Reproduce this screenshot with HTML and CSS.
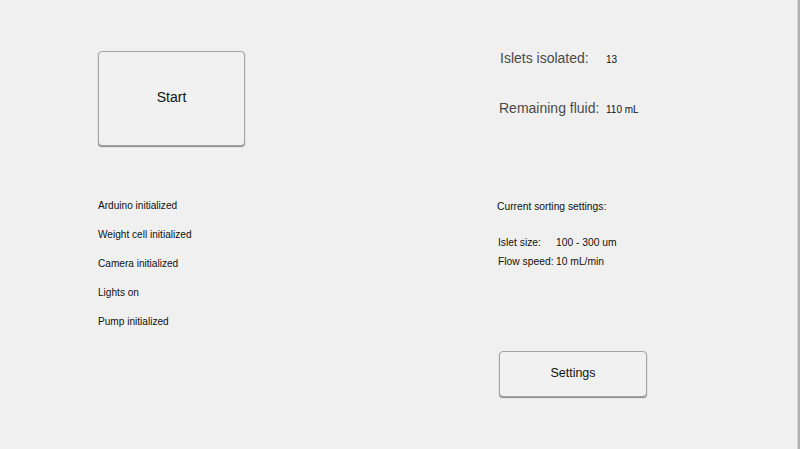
FILE: index.html
```html
<!DOCTYPE html>
<html>
<head>
<meta charset="utf-8">
<link rel="stylesheet" href="styles.css">
</head>
<body>
<div class="app">
  <div class="col left">
    <button class="btn btn-start">Start</button>
    <ul class="status">
      <li>Arduino initialized</li>
      <li>Weight cell initialized</li>
      <li>Camera initialized</li>
      <li>Lights on</li>
      <li>Pump initialized</li>
    </ul>
  </div>
  <div class="col right">
    <div class="stat stat-islets"><span class="stat-label">Islets isolated:</span><span class="stat-value">13</span></div>
    <div class="stat stat-fluid"><span class="stat-label">Remaining fluid:</span><span class="stat-value">110 mL</span></div>
    <div class="settings-title">Current sorting settings:</div>
    <div class="setting setting-first"><span class="setting-label">Islet size:</span><span class="setting-value">100 - 300 um</span></div>
    <div class="setting"><span class="setting-label">Flow speed:</span><span class="setting-value">10 mL/min</span></div>
    <button class="btn btn-settings">Settings</button>
  </div>
</div>
</body>
</html>
```
FILE: styles.css
```css
html, body {
  margin: 0;
  padding: 0;
  background: #f0f0f0;
}
body {
  font-family: "Liberation Sans", Arial, sans-serif;
  color: #111;
}
.app {
  box-sizing: border-box;
  width: 800px;
  height: 449px;
  padding-left: 98px;
  display: grid;
  grid-template-columns: 399px 1fr;
  border-right: 2px solid #b0b0b0;
  box-shadow: inset -1px 0 0 #d8d8d8;
}
.col {
  display: flex;
  flex-direction: column;
  align-items: flex-start;
}
.btn {
  font-family: "Liberation Sans", Arial, sans-serif;
  color: #111;
  background: #f1f1f1;
  border: 1px solid #a4a4a4;
  border-radius: 4px;
  box-shadow: 0 1px 1px rgba(0, 0, 0, 0.45);
  padding: 0;
}
.btn-start {
  margin-top: 51px;
  width: 147px;
  height: 95px;
  font-size: 14px;
  padding-bottom: 4px;
}
.status {
  list-style: none;
  margin: 45px 0 0 0;
  padding: 0;
  font-size: 10.1px;
  line-height: 29px;
}
.stat {
  display: flex;
  align-items: baseline;
  color: #4a4a4a;
}
.stat-label {
  font-size: 14px;
  line-height: 20px;
}
.stat-value {
  font-size: 10px;
  color: #111;
}
.stat-islets {
  margin-top: 48px;
  padding-left: 3px;
}
.stat-islets .stat-label {
  width: 106px;
}
.stat-fluid {
  margin-top: 30px;
  padding-left: 2px;
}
.stat-fluid .stat-label {
  width: 107px;
}
.settings-title {
  margin-top: 81px;
  font-size: 10.3px;
  line-height: 16px;
}
.setting {
  display: flex;
  font-size: 10.3px;
  line-height: 19px;
  padding-left: 1px;
}
.setting-first {
  margin-top: 18px;
}
.setting-label {
  width: 58px;
}
.btn-settings {
  margin-top: 80px;
  margin-left: 2px;
  width: 148px;
  height: 46px;
  font-size: 12.5px;
  padding-bottom: 2px;
}
```
